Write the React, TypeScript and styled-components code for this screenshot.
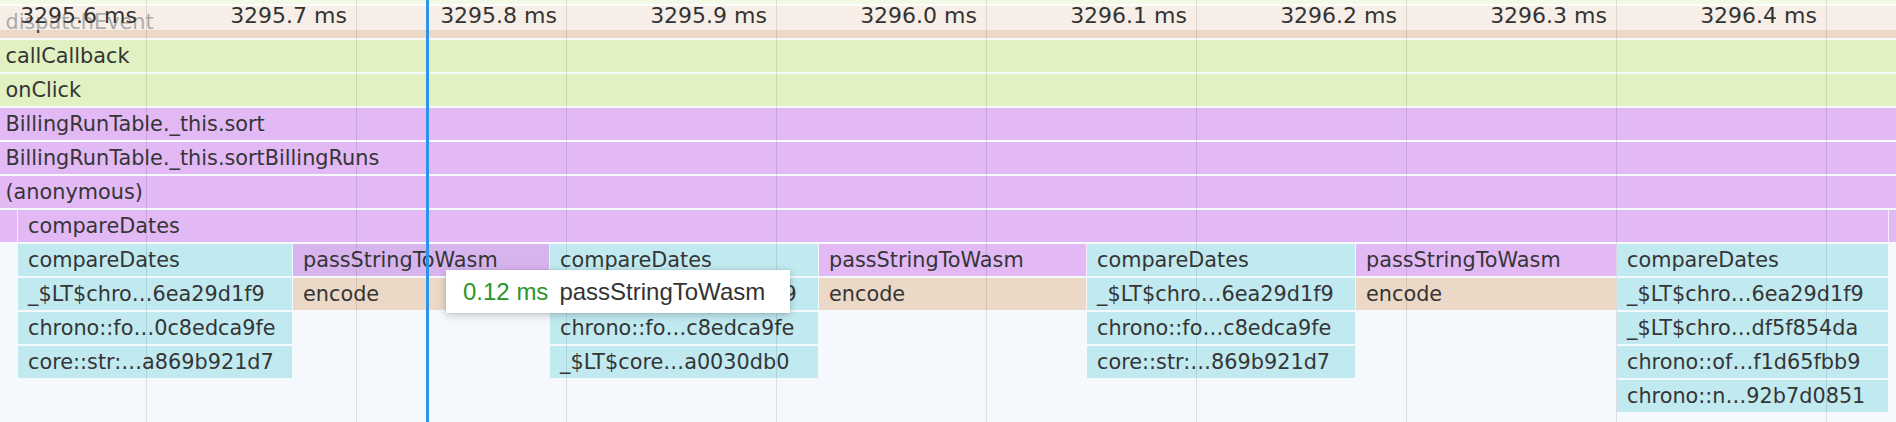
import React from "react";
import styled, { createGlobalStyle } from "styled-components";

const GlobalStyle = createGlobalStyle`
  html, body { margin: 0; padding: 0; background: #f5f8fc; }
  #root { width: 1896px; height: 422px; }
`;

type Kind = "green" | "purple" | "purpleHover" | "cyan" | "tan";

const colors: Record<Kind, string> = {
  green: "#e1f1c2",
  purple: "#e3b9f5",
  purpleHover: "#d8b4ee",
  cyan: "#c0eaf0",
  tan: "#ecd8c6",
};

interface BarData {
  x: number;
  w: number;
  kind: Kind;
  label?: string;
  clipped?: boolean;
}

const Chart = styled.div`
  position: relative;
  width: 1896px;
  height: 422px;
  overflow: hidden;
  background: #f5f8fc;
  font-family: "DejaVu Sans", "Liberation Sans", sans-serif;
`;

const Rows = styled.div`
  display: flex;
  flex-direction: column;
  gap: 2px;
  margin-top: -28px;
`;

const Row = styled.div`
  display: flex;
  height: 32px;
  flex-shrink: 0;
`;

const Spacer = styled.div`
  flex-shrink: 0;
  height: 100%;
`;

const Bar = styled.div<{ $kind: Kind; $clipped?: boolean }>`
  flex-shrink: 0;
  box-sizing: border-box;
  height: 100%;
  background: ${(p) => colors[p.$kind]};
  border-right: 1px solid rgba(255, 255, 255, 0.75);
  color: #353535;
  font-size: 20.8px;
  line-height: 32px;
  white-space: nowrap;
  overflow: hidden;
  padding-left: ${(p) => (p.$clipped ? "5.5px" : "10px")};
`;

const HeaderBand = styled.div`
  position: absolute;
  left: 0;
  top: 0;
  width: 100%;
  height: 30px;
  background: rgba(255, 255, 255, 0.58);
`;

const Grid = styled.div`
  position: absolute;
  top: 0;
  bottom: 0;
  left: -63px;
  display: flex;
`;

const TickCell = styled.div`
  flex-shrink: 0;
  box-sizing: border-box;
  width: 210px;
  height: 100%;
  border-right: 1px solid rgba(0, 0, 0, 0.1);
`;

const TickLabel = styled.div`
  height: 30px;
  line-height: 31px;
  text-align: right;
  padding-right: 9px;
  font-size: 22px;
  color: #333;
  white-space: nowrap;
`;

const Cursor = styled.div`
  position: absolute;
  top: 0;
  bottom: 0;
  left: 426px;
  width: 3px;
  background: #2b95ec;
`;

const Tooltip = styled.div`
  position: absolute;
  left: 446px;
  top: 270px;
  width: 344px;
  height: 43px;
  box-sizing: border-box;
  padding: 0 0 0 17px;
  display: flex;
  align-items: center;
  background: #fff;
  box-shadow: 0 2px 8px rgba(0, 0, 0, 0.22), 0 0 1px rgba(0, 0, 0, 0.2);
  font-family: "Liberation Sans", Arial, sans-serif;
  font-size: 24px;
  white-space: nowrap;
`;

const Duration = styled.span`
  color: #2a962a;
  margin-right: 11px;
`;

const FrameName = styled.span`
  color: #333;
`;

const full = (kind: Kind, label?: string): BarData[] => [
  { x: 0, w: 2000, kind, label, clipped: true },
];

const B = [18, 293, 550, 819, 1087, 1356, 1617, 1889];
const seg = (i: number) => ({ x: B[i], w: B[i + 1] - B[i] });

const rows: BarData[][] = [
  full("green"),
  full("tan", "dispatchEvent"),
  full("green", "callCallback"),
  full("green", "onClick"),
  full("purple", "BillingRunTable._this.sort"),
  full("purple", "BillingRunTable._this.sortBillingRuns"),
  full("purple", "(anonymous)"),
  [
    { x: 0, w: 18, kind: "purple" },
    { x: 18, w: 1871, kind: "purple", label: "compareDates" },
    { x: 1889, w: 40, kind: "purple" },
  ],
  [
    { ...seg(0), kind: "cyan", label: "compareDates" },
    { ...seg(1), kind: "purpleHover", label: "passStringToWasm" },
    { ...seg(2), kind: "cyan", label: "compareDates" },
    { ...seg(3), kind: "purple", label: "passStringToWasm" },
    { ...seg(4), kind: "cyan", label: "compareDates" },
    { ...seg(5), kind: "purple", label: "passStringToWasm" },
    { ...seg(6), kind: "cyan", label: "compareDates" },
  ],
  [
    { ...seg(0), kind: "cyan", label: "_$LT$chro…6ea29d1f9" },
    { ...seg(1), kind: "tan", label: "encode" },
    { ...seg(2), kind: "cyan", label: "_$LT$chro…6ea29d1f9" },
    { ...seg(3), kind: "tan", label: "encode" },
    { ...seg(4), kind: "cyan", label: "_$LT$chro…6ea29d1f9" },
    { ...seg(5), kind: "tan", label: "encode" },
    { ...seg(6), kind: "cyan", label: "_$LT$chro…6ea29d1f9" },
  ],
  [
    { ...seg(0), kind: "cyan", label: "chrono::fo…0c8edca9fe" },
    { ...seg(2), kind: "cyan", label: "chrono::fo…c8edca9fe" },
    { ...seg(4), kind: "cyan", label: "chrono::fo…c8edca9fe" },
    { ...seg(6), kind: "cyan", label: "_$LT$chro…df5f854da" },
  ],
  [
    { ...seg(0), kind: "cyan", label: "core::str:…a869b921d7" },
    { ...seg(2), kind: "cyan", label: "_$LT$core…a0030db0" },
    { ...seg(4), kind: "cyan", label: "core::str:…869b921d7" },
    { ...seg(6), kind: "cyan", label: "chrono::of…f1d65fbb9" },
  ],
  [{ ...seg(6), kind: "cyan", label: "chrono::n…92b7d0851" }],
];

const ticks = [
  "3295.6 ms",
  "3295.7 ms",
  "3295.8 ms",
  "3295.9 ms",
  "3296.0 ms",
  "3296.1 ms",
  "3296.2 ms",
  "3296.3 ms",
  "3296.4 ms",
  "",
];

function StackRow({ bars }: { bars: BarData[] }) {
  let cursor = 0;
  const items: React.ReactNode[] = [];
  bars.forEach((b, i) => {
    if (b.x > cursor) {
      items.push(<Spacer key={`s${i}`} style={{ width: b.x - cursor }} />);
    }
    items.push(
      <Bar key={`b${i}`} $kind={b.kind} $clipped={b.clipped} style={{ width: b.w }}>
        {b.label}
      </Bar>
    );
    cursor = b.x + b.w;
  });
  return <Row>{items}</Row>;
}

export default function App() {
  return (
    <>
      <GlobalStyle />
      <Chart>
        <Rows>
          {rows.map((r, i) => (
            <StackRow key={i} bars={r} />
          ))}
        </Rows>
        <HeaderBand />
        <Grid>
          {ticks.map((t, i) => (
            <TickCell key={i}>
              <TickLabel>{t}</TickLabel>
            </TickCell>
          ))}
        </Grid>
        <Cursor />
        <Tooltip>
          <Duration>0.12 ms</Duration>
          <FrameName>passStringToWasm</FrameName>
        </Tooltip>
      </Chart>
    </>
  );
}
